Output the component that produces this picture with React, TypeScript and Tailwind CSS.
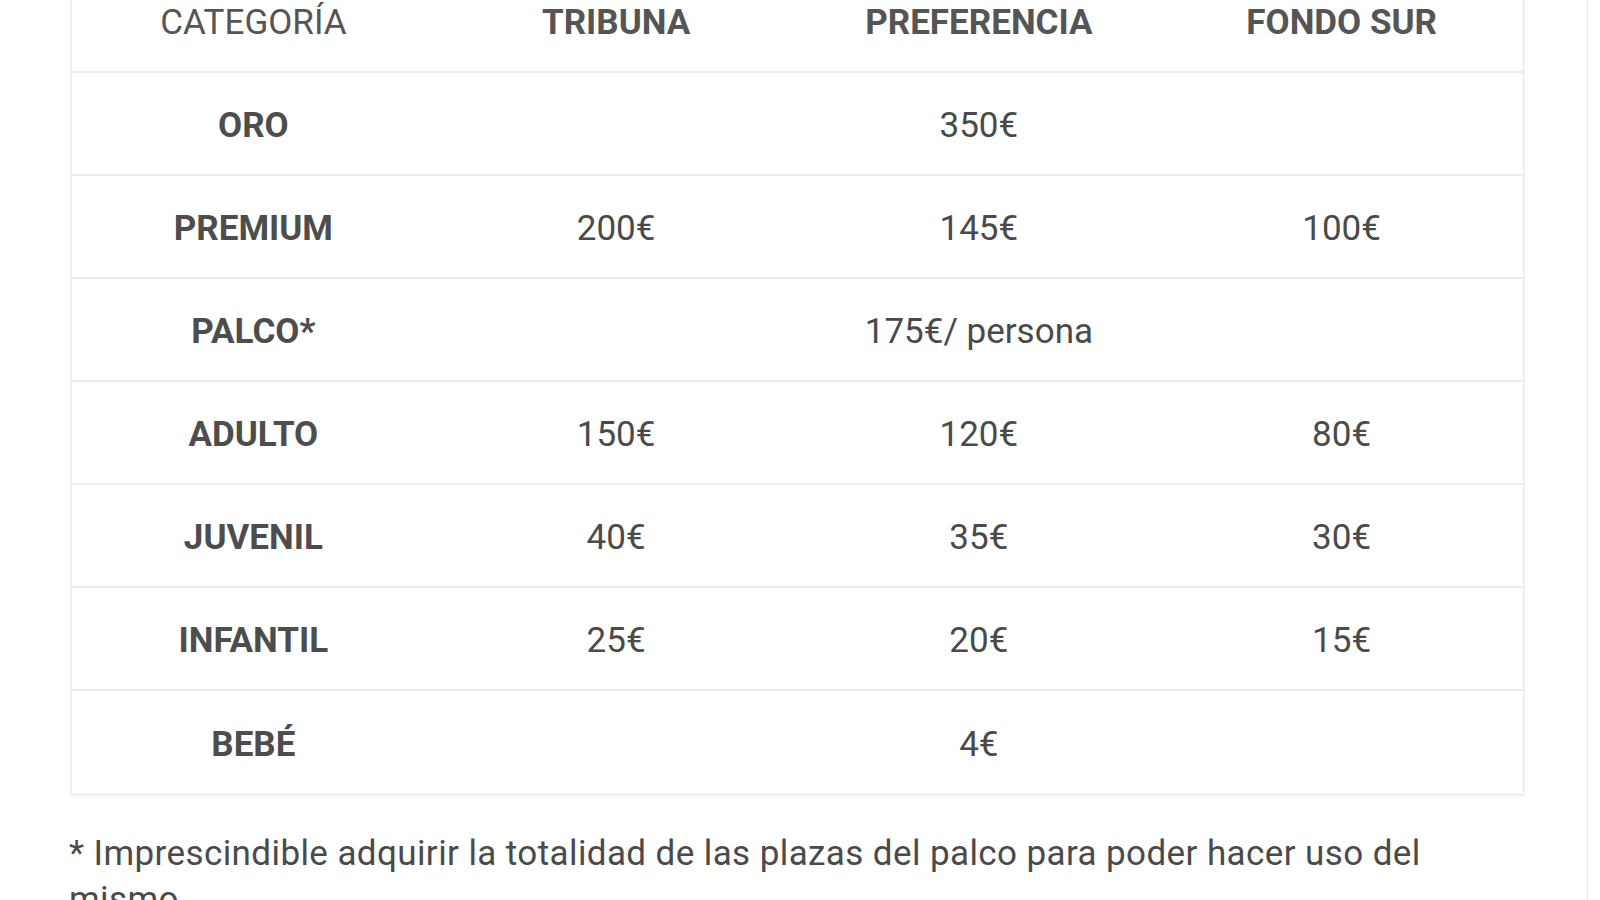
const rows: { name: string; cells: string[] | string }[] = [
  { name: "ORO", cells: "350€" },
  { name: "PREMIUM", cells: ["200€", "145€", "100€"] },
  { name: "PALCO*", cells: "175€/ persona" },
  { name: "ADULTO", cells: ["150€", "120€", "80€"] },
  { name: "JUVENIL", cells: ["40€", "35€", "30€"] },
  { name: "INFANTIL", cells: ["25€", "20€", "15€"] },
  { name: "BEBÉ", cells: "4€" },
];

export default function App() {
  return (
    <div className="h-[900px] w-[1600px] overflow-hidden bg-white font-['Roboto',sans-serif] text-[#4a4a4a]">
      <div className="flex h-full">
        <div className="w-[1587px] pl-[71px] pr-[63px]">
          <div className="-mt-[31px] border border-[#e9e9e9] bg-white shadow-[0_1px_4px_rgba(0,0,0,0.08)]">
            <div className="grid h-[103px] grid-cols-4 items-center border-b-2 border-[#ececec] pt-[5px] text-[35px]">
              <div className="text-center font-normal text-[#555]">CATEGORÍA</div>
              <div className="text-center font-bold text-[#555]">TRIBUNA</div>
              <div className="text-center font-bold text-[#555]">PREFERENCIA</div>
              <div className="text-center font-bold text-[#555]">FONDO SUR</div>
            </div>
            {rows.map((r, i) => (
              <div
                key={r.name}
                className={`grid h-[103px] grid-cols-4 items-center pt-[5px] text-[35px] ${
                  i < rows.length - 1 ? "border-b-2 border-[#ececec]" : ""
                }`}
              >
                <div className="text-center font-bold text-[#4d4d4d]">{r.name}</div>
                {typeof r.cells === "string" ? (
                  <>
                    <div />
                    <div className="whitespace-nowrap text-center text-[#4a4a4a]">{r.cells}</div>
                    <div />
                  </>
                ) : (
                  r.cells.map((c) => (
                    <div key={c} className="text-center text-[#4a4a4a]">
                      {c}
                    </div>
                  ))
                )}
              </div>
            ))}
          </div>
          <p className="mt-[36px] ml-[-2px] w-[1440px] text-[35px] leading-[46px] tracking-[0.4px] text-[#4a4a4a]">
            * Imprescindible adquirir la totalidad de las plazas del palco para poder hacer uso del mismo
          </p>
        </div>
        <div className="h-full w-px bg-[#e6e6e6]" />
      </div>
    </div>
  );
}
